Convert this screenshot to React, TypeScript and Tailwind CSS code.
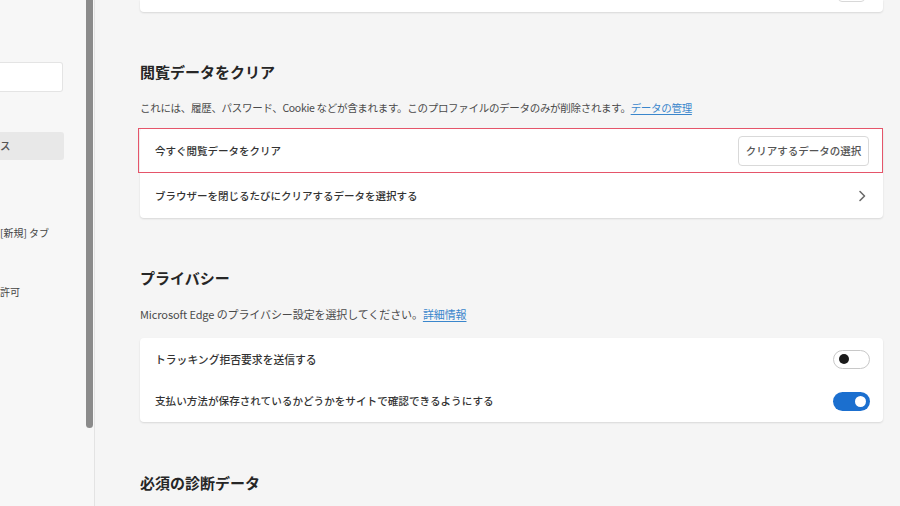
import React from "react";

const font = { fontFamily: '"Noto Sans CJK JP", "Noto Sans", sans-serif' };

function Toggle({ on }: { on: boolean }) {
  return on ? (
    <div className="flex h-[19px] w-[37px] items-center justify-end rounded-full bg-[#1b6fcf] pr-[4px]">
      <div className="h-[11px] w-[11px] rounded-full bg-white" />
    </div>
  ) : (
    <div className="flex h-[19px] w-[37px] items-center rounded-full border border-[#c8c8c8] bg-white pl-[5px]">
      <div className="h-[10px] w-[10px] rounded-full bg-[#1a1a1a]" />
    </div>
  );
}

export default function App() {
  return (
    <div className="flex h-[506px] w-[900px] overflow-hidden bg-[#f5f5f5]" style={font}>
      {/* sidebar */}
      <div className="flex w-[95px] shrink-0 border-r border-[#e3e3e3] bg-[#f7f7f7]">
        <div className="flex w-[86px] flex-col text-[10px] text-[#444]">
          <div className="mt-[62px] h-[30px] w-[63px] rounded-r-[3px] border border-l-0 border-[#e4e4e4] bg-white" />
          <div className="mt-[40px] flex h-[28px] w-[64px] items-center rounded-r-[3px] bg-[#e8e8e8] text-[10.5px] font-medium text-[#555]">
            <span>ス</span>
          </div>
          <div className="mt-[64px] flex h-[16px] items-center whitespace-nowrap">
            <span>[新規] タブ</span>
          </div>
          <div className="mt-[43px] flex h-[16px] items-center whitespace-nowrap">
            <span>許可</span>
          </div>
        </div>
        <div className="w-[8px]">
          <div className="h-[428px] w-[7px] rounded-b-[4px] bg-[#8b8b8b]" />
        </div>
      </div>

      {/* main */}
      <div className="flex w-[788px] flex-col pl-[45px]">
        <div className="relative h-[12px] w-[743px] rounded-b-[4px] bg-white shadow-[0_1px_2px_rgba(0,0,0,0.12)]">
          <div className="absolute right-[18px] top-[-10px] h-[12px] w-[27px] rounded-[4px] border border-[#d8d8d8]" />
        </div>

        <div className="mt-[50px] h-[20px] text-[15px] font-bold leading-[20px] text-[#262626]">
          閲覧データをクリア
        </div>
        <div className="mt-[18px] h-[16px] whitespace-nowrap text-[10.5px] leading-[16px] tracking-[-0.3px] text-[#4a4a4a]">
          これには、履歴、パスワード、Cookie などが含まれます。このプロファイルのデータのみが削除されます。
          <span className="text-[#3a86cc] underline underline-offset-2">データの管理</span>
        </div>

        <div className="mt-[12px] flex w-[743px] flex-col rounded-[4px] bg-white shadow-[0_1px_2px_rgba(0,0,0,0.12)]">
          <div className="-ml-[2px] flex h-[45px] w-[745px] items-center justify-between border-[1.5px] border-[#e5556a] pl-[16px] pr-[13px]">
            <span className="text-[10.5px] font-medium text-[#333]">今すぐ閲覧データをクリア</span>
            <div className="flex h-[30px] w-[131px] items-center justify-center rounded-[4px] border border-[#d9d9d9] bg-white text-[10.5px] font-medium text-[#555]">
              クリアするデータの選択
            </div>
          </div>
          <div className="flex h-[45px] items-center justify-between pl-[15px] pr-[17px]">
            <span className="text-[10.5px] font-medium text-[#333]">ブラウザーを閉じるたびにクリアするデータを選択する</span>
            <svg width="8" height="12" viewBox="0 0 8 12">
              <path d="M2 1.5 L6.5 6 L2 10.5" fill="none" stroke="#6b6b6b" strokeWidth="1.6" strokeLinecap="round" strokeLinejoin="round" />
            </svg>
          </div>
        </div>

        <div className="mt-[50px] h-[20px] text-[15px] font-bold leading-[20px] text-[#262626]">
          プライバシー
        </div>
        <div className="mt-[18px] h-[16px] whitespace-nowrap text-[11px] leading-[16px] tracking-[-0.1px] text-[#4a4a4a]">
          Microsoft Edge のプライバシー設定を選択してください。
          <span className="text-[#3a86cc] underline underline-offset-2">詳細情報</span>
        </div>

        <div className="mt-[16px] flex w-[743px] flex-col rounded-[4px] bg-white shadow-[0_1px_2px_rgba(0,0,0,0.12)]">
          <div className="flex h-[42px] items-center justify-between pl-[15px] pr-[13px]">
            <span className="text-[10.8px] font-medium text-[#333]">トラッキング拒否要求を送信する</span>
            <Toggle on={false} />
          </div>
          <div className="flex h-[42px] items-center justify-between pl-[15px] pr-[13px]">
            <span className="text-[10.6px] font-medium text-[#333]">支払い方法が保存されているかどうかをサイトで確認できるようにする</span>
            <Toggle on={true} />
          </div>
        </div>

        <div className="mt-[51px] h-[20px] whitespace-nowrap text-[15px] font-bold leading-[20px] text-[#262626]">
          必須の診断データ
        </div>
      </div>
    </div>
  );
}
